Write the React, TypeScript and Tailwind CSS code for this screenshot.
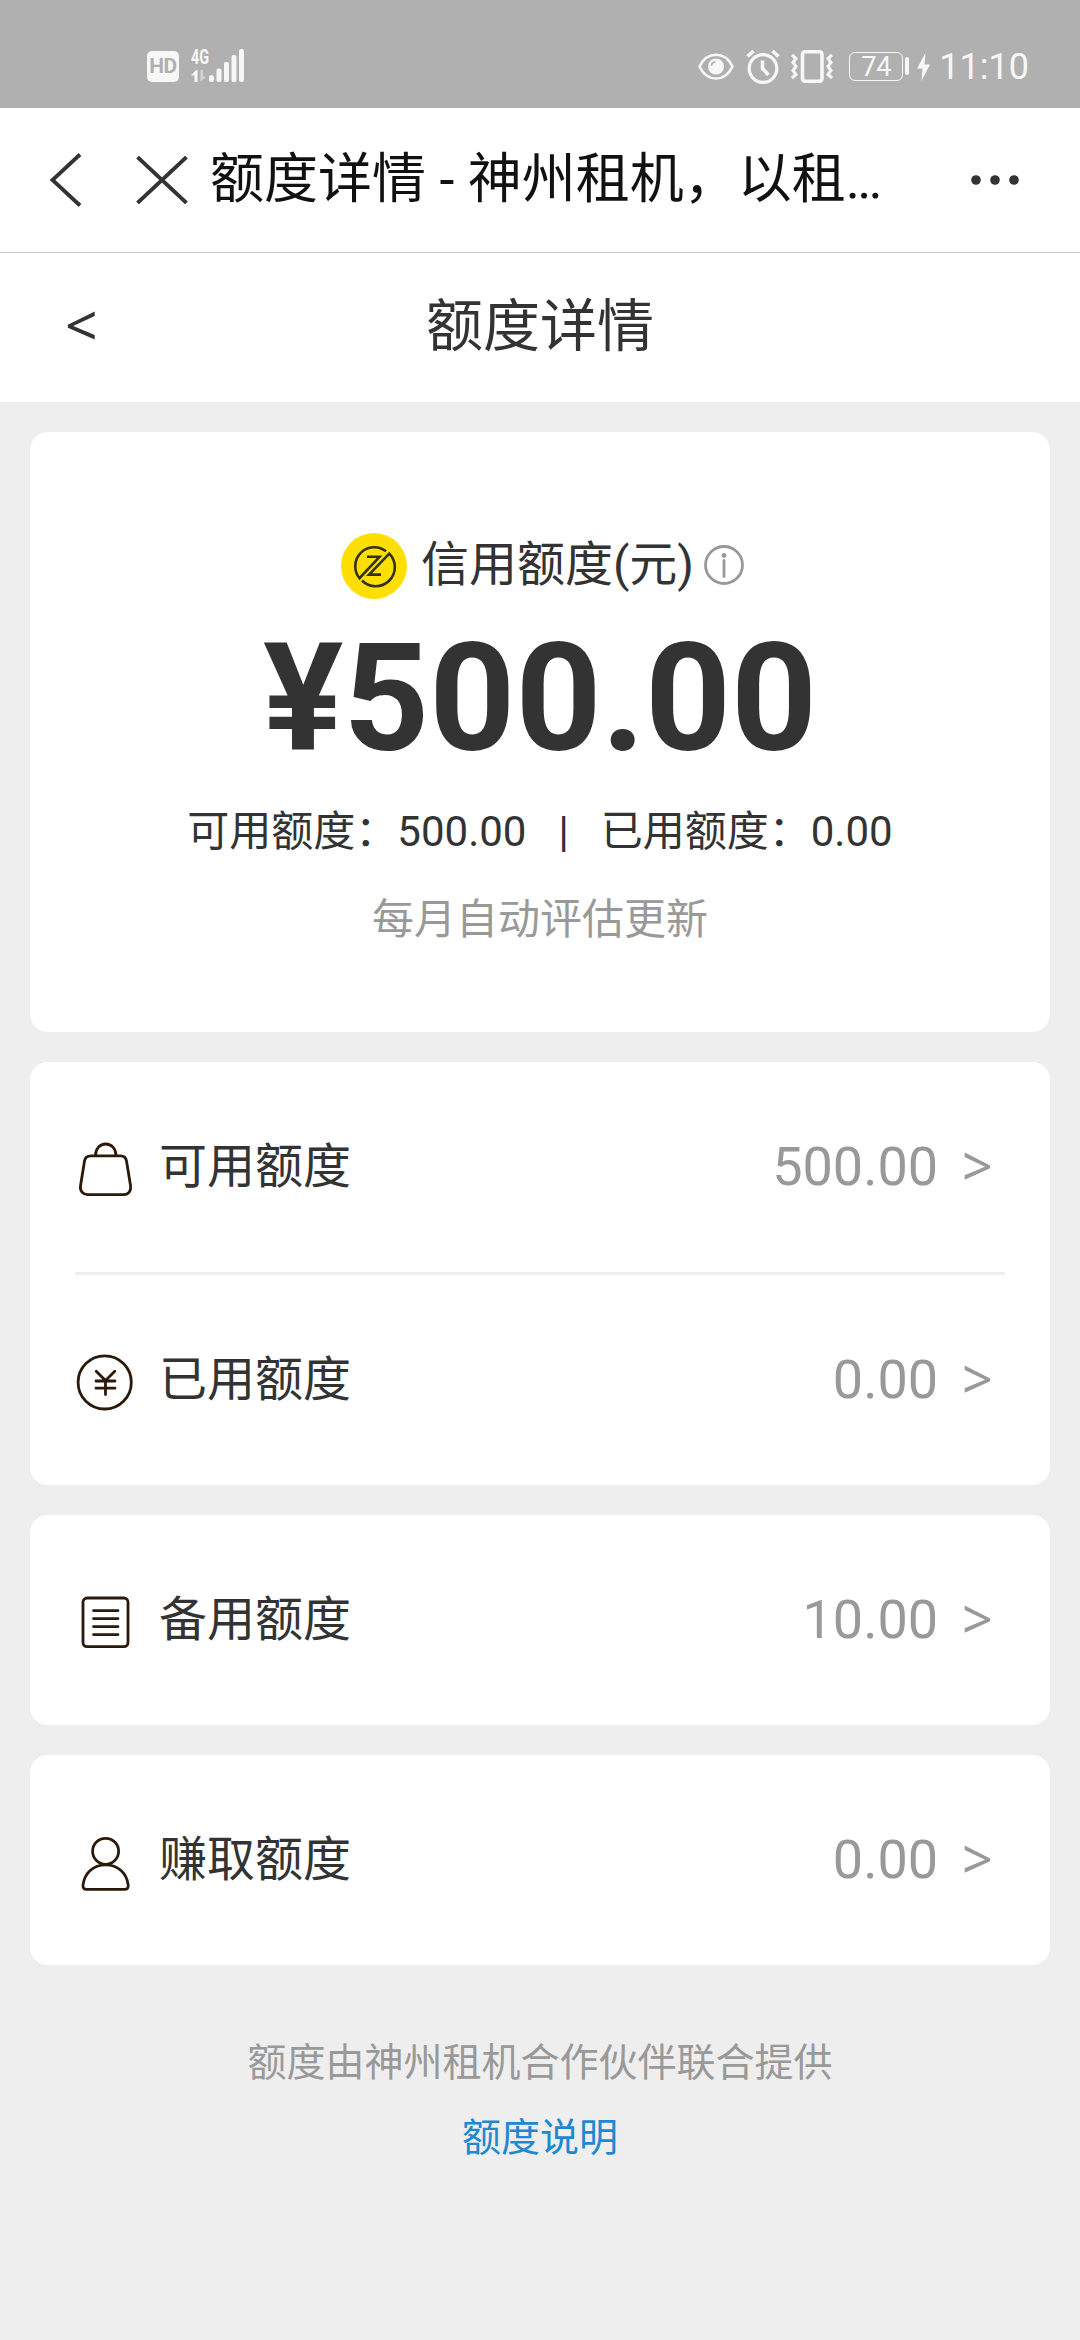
import React from 'react';

interface QuotaItem {
  label: string;
  value: string;
  icon: React.ReactNode;
}

const iconProps = {
  width: 60,
  height: 60,
  viewBox: '0 0 60 60',
  fill: 'none',
  stroke: '#2b1a0a',
  strokeWidth: 2.8,
  strokeLinecap: 'round' as const,
  strokeLinejoin: 'round' as const,
};

const BagIcon = () => (
  <svg {...iconProps}>
    <path d="M20.5 15.5C20.5 8.5 25 4 30.7 4S41 8.5 41 15.5" />
    <path d="M16 15.8H45.5C49 15.8 51 17.8 51.5 21L55.6 46C56.2 51 53.5 54.6 49 54.6H12.5C8 54.6 4.8 51 5.5 46L9.5 21C10 17.8 12.5 15.8 16 15.8Z" />
  </svg>
);

const CoinIcon = () => (
  <svg {...iconProps}>
    <circle cx="29.7" cy="29.4" r="26.6" />
    <path d="M21.2 18.2L30.5 27.5L39.8 18.2M21 28H40M21 35.2H40M30.5 27.5V41.5" />
  </svg>
);

const ListIcon = () => (
  <svg {...iconProps}>
    <rect x="8" y="5" width="45" height="48.6" rx="4" />
    <path d="M18.5 17.6H43M18.5 25.6H43M18.5 33.6H43M18.5 41.6H43" />
  </svg>
);

const UserIcon = () => (
  <svg {...iconProps}>
    <circle cx="30.6" cy="18.3" r="13" />
    <path d="M30.6 31.8C18 31.8 9.5 40.5 8 52C7.6 54.8 9 56.4 11.5 56.4H49.7C52.2 56.4 53.6 54.8 53.2 52C51.7 40.5 43.2 31.8 30.6 31.8Z" />
  </svg>
);

const Logo = () => (
  <svg width="66" height="66" viewBox="0 0 66 66" fill="none" stroke="#33301c" strokeWidth="2.6">
    <circle cx="33" cy="33" r="33" fill="#ffdf00" stroke="none" />
    <path d="M26 23.8H38.5L18.5 45.2A19 19 0 0 1 45 18.3" />
    <path d="M40 41.6H28L48.3 20.600A19 19 0 0 1 21 47.500" />
  </svg>
);

const InfoIcon = () => (
  <svg width="42" height="42" viewBox="0 0 42 42" fill="none" stroke="#999" strokeWidth="2.8">
    <circle cx="21" cy="21" r="18.5" />
    <circle cx="21" cy="11.5" r="2.4" fill="#999" stroke="none" />
    <path d="M21 16.5V32.5" strokeLinecap="round" />
  </svg>
);

const StatusBar: React.FC = () => (
  <div className="flex h-[108px] items-start justify-between bg-[#b0b0b0] pt-[49px] pr-[51px] pl-[147px] text-[#f7f7f7]">
    <div className="flex gap-3">
      <div className="mt-[2px] flex h-[31px] w-[32px] items-center justify-center rounded-[5px] bg-[#f7f7f7] text-[21px] leading-[25px] font-bold tracking-[-0.5px] text-[#b0b0b0]">
        HD
      </div>
      <svg className="-mt-[8px]" width="60" height="42" viewBox="0 -8 60 42" fill="currentColor">
        <text x="0" y="15" fontSize="20" fontWeight="700" textLength="18" lengthAdjust="spacingAndGlyphs">4G</text>
        <path d="M0 26.5L5 21H6.5V33H3.5V26.5Z" />
        <path d="M9.5 21V33L15 27.5H12V21Z" opacity=".5" />
        <rect x="18" y="26" width="5" height="7" rx="2.5" />
        <rect x="25.5" y="19.5" width="5" height="13.5" rx="2" />
        <rect x="33" y="13" width="5" height="20" rx="2" />
        <rect x="40.5" y="6" width="5" height="27" rx="2" />
        <rect x="48" y="0" width="5" height="33" rx="2" />
      </svg>
    </div>
    <div className="flex">
      <svg width="36" height="34" viewBox="0 0 36 34" fill="none" stroke="currentColor" strokeWidth="2.6">
        <path d="M1.5 17.5C9 1.8 27 1.8 34.5 17.5C27 33.5 9 33.5 1.5 17.5Z" />
        <circle cx="18" cy="17.5" r="8" fill="currentColor" stroke="none" />
        <path d="M13.5 17C13.5 14.5 15 13 17.5 13" stroke="#b0b0b0" strokeWidth="1.6" />
      </svg>
      <svg className="ml-[12px]" width="34" height="36" viewBox="0 0 34 36" fill="none" stroke="currentColor" strokeWidth="3.2">
        <circle cx="17" cy="19.5" r="13.8" />
        <path d="M16.5 11.5V19.5L22.5 26" strokeWidth="3.6" />
        <path d="M1.5 7.5L7.5 2M32.5 7.5L26.5 2" strokeWidth="3.6" />
      </svg>
      <svg className="ml-[11px]" width="42" height="36" viewBox="0 0 42 36" fill="none" stroke="currentColor" strokeWidth="3.6">
        <rect x="11.5" y="2.8" width="19.5" height="29.5" rx="2.5" />
        <path d="M1 6L5 9.5L2 13.5L5 17.5L2 21.5L5 25.5L1 29M41 6L37 9.5L40 13.5L37 17.5L40 21.5L37 25.5L41 29" strokeWidth="3" />
      </svg>
      <div className="mt-[3px] ml-[16px] flex h-[29px] w-[54px] items-center justify-center rounded-[6px] border-[1.5px] border-[#f7f7f7] pt-[2px] text-[27px] leading-none">
        74
      </div>
      <div className="mt-[8px] ml-[2px] h-[18px] w-[4px] rounded-[2px] bg-[#f7f7f7]" />
      <svg className="mt-[4px] ml-[8px]" width="13" height="28" viewBox="0 0 13 28" fill="currentColor">
        <path d="M8.5 0L0 15.5H5.5L4.5 28L13 11.5H7.5Z" />
      </svg>
      <span className="ml-[9px] text-[36px] leading-[37px]">11:10</span>
    </div>
  </div>
);

const NavBar: React.FC = () => (
  <div className="flex h-[145px] items-center border-b border-[#c6c6c6] bg-white pl-[49px]">
    <svg width="34" height="54" viewBox="0 0 34 54" fill="none" stroke="#333" strokeWidth="3.8">
      <path d="M31 1.5L3.5 27L31 52.5" />
    </svg>
    <svg className="ml-[53px]" width="52" height="48" viewBox="0 0 52 48" fill="none" stroke="#333" strokeWidth="3.8">
      <path d="M1.5 1L50.5 47M50.5 1L1.5 47" />
    </svg>
    <div className="ml-[22px] w-[700px] text-[54px] leading-[80px] whitespace-nowrap text-[#111]">
      额度详情 - 神州租机，以租<span className="tracking-[-2.8px]">...</span>
    </div>
    <svg className="ml-[60px]" width="50" height="12" viewBox="0 0 50 12" fill="#333">
      <circle cx="6" cy="6" r="4.8" />
      <circle cx="25" cy="6" r="4.8" />
      <circle cx="44" cy="6" r="4.8" />
    </svg>
  </div>
);

const QuotaRow: React.FC<QuotaItem> = ({ label, value, icon }) => (
  <div className="flex h-[210px] items-center">
    <div className="pt-[6px]">{icon}</div>
    <span className="ml-[24px] text-[48px] leading-[72px] text-[#333]">{label}</span>
    <span className="ml-auto text-[54px] leading-[72px] text-[#999]">{value}</span>
    <span className="mr-[12px] ml-[24px] pb-[5px] font-['Noto_Sans'] text-[54px] leading-[72px] text-[#999]">&gt;</span>
  </div>
);

const groups: QuotaItem[][] = [
  [
    { label: '可用额度', value: '500.00', icon: <BagIcon /> },
    { label: '已用额度', value: '0.00', icon: <CoinIcon /> },
  ],
  [{ label: '备用额度', value: '10.00', icon: <ListIcon /> }],
  [{ label: '赚取额度', value: '0.00', icon: <UserIcon /> }],
];

const App: React.FC = () => {
  return (
    <div lang="zh-CN" className="min-h-[2340px] w-[1080px] bg-[#eee] font-['Roboto','Noto_Sans_CJK_SC',sans-serif]">
      <StatusBar />
      <NavBar />

      <header className="grid h-[149px] grid-cols-3 items-center bg-white px-[65px] text-[57px] leading-[80px] text-[#333]">
        <span className="pb-[8px] font-['Noto_Sans']">&lt;</span>
        <h1 className="pb-[2px] text-center">额度详情</h1>
      </header>

      <main className="flex flex-col gap-[30px] px-[30px] pt-[30px]">
        <section className="flex h-[600px] flex-col items-center rounded-[18px] bg-white pt-[101px] text-[#333]">
          <div className="flex h-[66px] items-center pl-[6px]">
            <Logo />
            <span className="ml-[14px] pb-[3px] text-[48px] leading-[66px]">信用额度(元)</span>
            <span className="ml-[9px] pb-[2px]">
              <InfoIcon />
            </span>
          </div>
          <div className="mt-[12px] text-[150px] leading-[176px] font-bold">¥500.00</div>
          <div className="mt-[15px] flex text-[42px] leading-[60px]">
            <span>可用额度：500.00</span>
            <span className="mx-[32px]">|</span>
            <span>已用额度：0.00</span>
          </div>
          <div className="mt-[28px] text-[42px] leading-[60px] text-[#999]">每月自动评估更新</div>
        </section>

        {groups.map((items, i) => (
          <section key={i} className="rounded-[18px] bg-white px-[45px]">
            {items.map((item, j) => (
              <React.Fragment key={item.label}>
                {j > 0 && <div className="h-[3px] bg-[#eee]" />}
                <QuotaRow {...item} />
              </React.Fragment>
            ))}
          </section>
        ))}
      </main>

      <footer className="flex flex-col items-center pt-[68px] text-[39px] leading-[60px]">
        <p className="text-[#999]">额度由神州租机合作伙伴联合提供</p>
        <a className="mt-[15px] text-[#1e88d2]">额度说明</a>
      </footer>
    </div>
  );
};

export default App;
